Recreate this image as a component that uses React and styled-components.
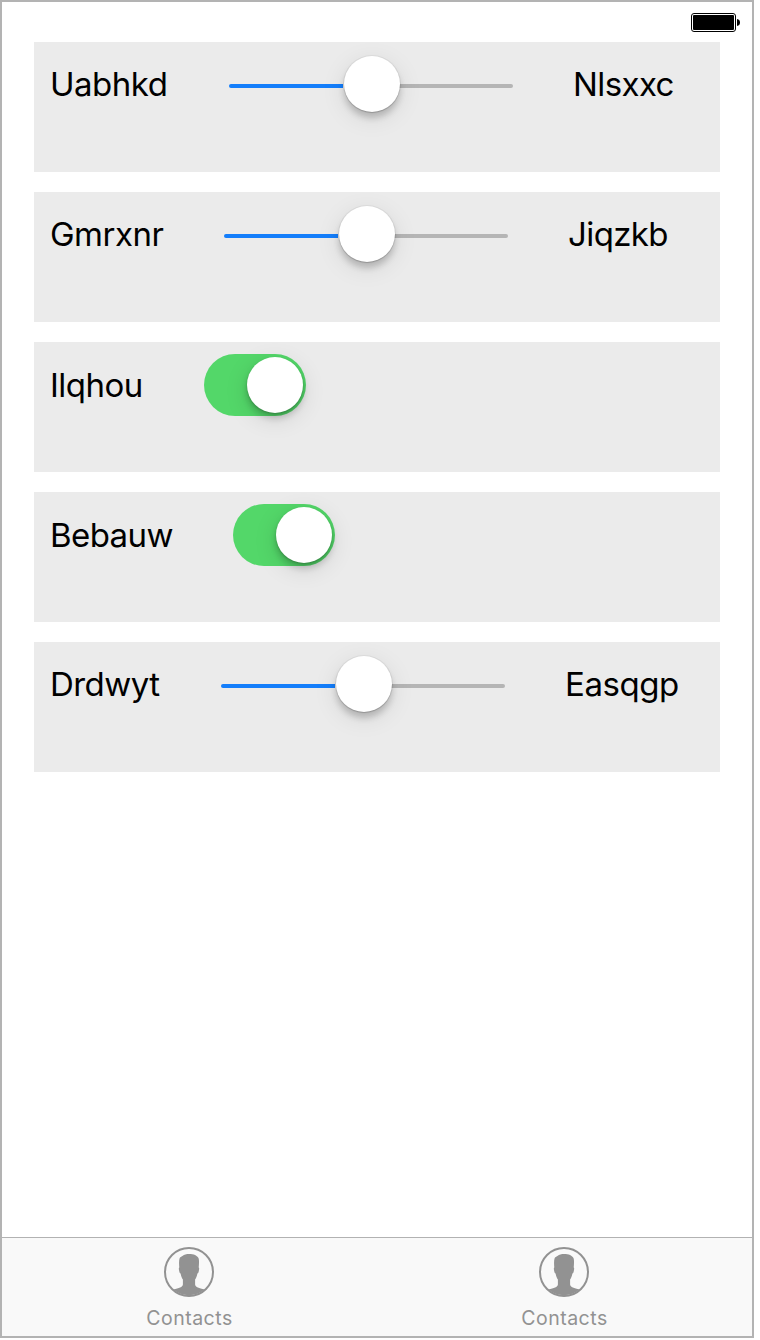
import React from "react";
import styled, { createGlobalStyle } from "styled-components";

const GlobalStyle = createGlobalStyle`
  * { box-sizing: border-box; }
  body { margin: 0; background: #fff; font-family: Inter, "Liberation Sans", sans-serif; }
`;

const Screen = styled.div`
  width: 754px;
  height: 1338px;
  border: 2px solid #b3b3b3;
  background: #fff;
  display: flex;
  flex-direction: column;
`;

const StatusBar = styled.header`
  height: 40px;
  padding: 11px 12px 0 0;
  display: flex;
  justify-content: flex-end;
`;

const List = styled.main`
  flex: 1;
  padding: 0 32px;
  display: flex;
  flex-direction: column;
  gap: 20px;
`;

const Row = styled.section`
  height: 130px;
  background: #ebebeb;
  padding: 12px 0 0 16px;
  display: flex;
  align-items: flex-start;
`;

const Label = styled.span`
  flex: none;
  width: ${(p) => p.$width}px;
  padding-top: ${(p) => p.$drop || 0}px;
  font-size: 33px;
  line-height: 60px;
  letter-spacing: ${(p) => p.$tracking || 0}px;
  color: #000;
  white-space: nowrap;
`;

const Value = styled(Label)`
  margin-left: 60px;
`;

const SliderBox = styled.div`
  width: 284px;
  height: 60px;
  display: flex;
  align-items: center;
`;

const Track = styled.div`
  flex: 1;
  height: 4px;
  margin-top: 4px;
  background: ${(p) => (p.$filled ? "#147efb" : "#b5b5b5")};
  border-radius: ${(p) => (p.$filled ? "2px 0 0 2px" : "0 2px 2px 0")};
`;

const Knob = styled.div`
  flex: none;
  width: 56px;
  height: 56px;
  border-radius: 50%;
  background: #fff;
`;

const SliderKnob = styled(Knob)`
  position: relative;
  margin-left: 1px;
  margin-right: -1px;
  box-shadow: 0 0 0 1px rgba(0, 0, 0, 0.05), 0 1px 1px rgba(0, 0, 0, 0.14),
    0 6px 6px rgba(0, 0, 0, 0.18), 0 6px 24px rgba(0, 0, 0, 0.1);
`;

const SwitchBox = styled.div`
  width: 102px;
  height: 62px;
  padding: 3px;
  border-radius: 31px;
  background: #53d769;
  display: flex;
  justify-content: flex-end;
`;

const SwitchKnob = styled(Knob)`
  box-shadow: 0 1px 2px rgba(0, 0, 0, 0.18), 0 5px 7px rgba(0, 0, 0, 0.2),
    0 6px 24px rgba(0, 0, 0, 0.12);
`;

const TabBar = styled.nav`
  height: 99px;
  border-top: 1px solid #b2b2b2;
  background: #f9f9f9;
  display: flex;
`;

const Tab = styled.div`
  flex: 1;
  padding-top: 9px;
  display: flex;
  flex-direction: column;
  align-items: center;
  color: #929292;
`;

const TabIcon = styled.svg`
  width: 50px;
  height: 50px;
  margin-right: 1px;
`;

const TabLabel = styled.span`
  margin-top: 9px;
  font-size: 19.5px;
  line-height: 24px;
  letter-spacing: 0.5px;
`;

const rows = [
  { label: "Uabhkd", width: 179, tracking: -0.5, value: "Nlsxxc", valueTracking: -0.6 },
  { label: "Gmrxnr", width: 174, tracking: -0.5, value: "Jiqzkb", valueTracking: -0.6 },
  { label: "Ilqhou", width: 154, tracking: -0.5 },
  { label: "Bebauw", width: 183, tracking: -0.6 },
  { label: "Drdwyt", width: 171, tracking: -0.55, value: "Easqgp", valueTracking: -0.45 },
];

function Battery() {
  return (
    <svg width="49" height="19" viewBox="0 0 49 19" aria-label="Battery">
      <rect x=".5" y=".5" width="44" height="18" rx="2.5" fill="#fff" stroke="#000" />
      <rect x="2" y="2" width="41" height="15" rx="1" fill="#000" />
      <path d="M46 6C48 6.3 49 7.5 49 9.5S48 12.7 46 13Z" fill="#000" />
    </svg>
  );
}

function ContactIcon() {
  return (
    <TabIcon viewBox="0 0 50 50" fill="none">
      <circle cx="25" cy="25" r="24" stroke="currentColor" strokeWidth="2" />
      <path
        fill="currentColor"
        d="M25.2 7C29.5 7 33.4 8.4 34.6 11.3C35.3 13.4 35 17 34.7 20.4C35.4 20.6 35.2 22.2 34.8 24C34.5 25.5 34.2 26.3 33.4 26.4C32.9 29.2 32.1 31 31.1 32.6V37.4C31.5 40.2 35 40.9 40.6 42.5A24.2 24.2 0 0 1 9.4 42.5C15 40.9 18.5 40.2 18.9 37.4V32.6C17.9 31 17.1 29.2 16.6 26.4C15.8 26.3 15.5 25.5 15.2 24C14.8 22.2 14.6 20.6 15.3 20.4C15 16.8 14.8 13.6 15.7 11.1C16.4 9.7 17.8 9.8 18.8 8.8C20 7.6 22.4 7 25.2 7Z"
      />
    </TabIcon>
  );
}

function Slider() {
  return (
    <SliderBox>
      <Track $filled />
      <SliderKnob />
      <Track />
    </SliderBox>
  );
}

export default function App() {
  return (
    <>
      <GlobalStyle />
      <Screen>
        <StatusBar>
          <Battery />
        </StatusBar>
        <List>
          {rows.map((r) => (
            <Row key={r.label}>
              <Label $width={r.width} $tracking={r.tracking} $drop={r.value ? 0 : 1}>
                {r.label}
              </Label>
              {r.value ? (
                <>
                  <Slider />
                  <Value $tracking={r.valueTracking}>{r.value}</Value>
                </>
              ) : (
                <SwitchBox>
                  <SwitchKnob />
                </SwitchBox>
              )}
            </Row>
          ))}
        </List>
        <TabBar>
          {[0, 1].map((i) => (
            <Tab key={i}>
              <ContactIcon />
              <TabLabel>Contacts</TabLabel>
            </Tab>
          ))}
        </TabBar>
      </Screen>
    </>
  );
}
